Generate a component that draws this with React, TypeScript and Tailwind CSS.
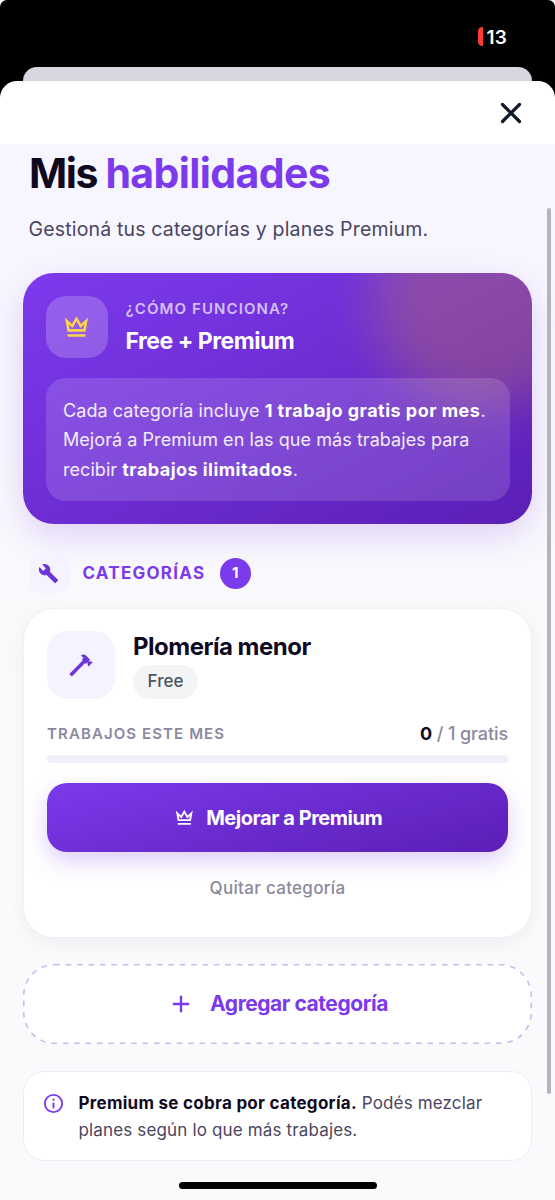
import React from "react";

const ICONS = {
  crown:
    "M12 8L15 13.2L18 10.5L17.3 14H6.7L6 10.5L9 13.2L12 8M12 4L8.5 10L3 5L5 16H19L21 5L15.5 10L12 4M19 18H5V19C5 19.6 5.4 20 6 20H18C18.6 20 19 19.6 19 19V18Z",
  wrench:
    "M22.7 19L13.6 9.9C14.5 7.6 14 4.9 12.1 3C10.1 1 7.1 .6 4.7 1.7L9 6L6 9L1.6 4.7C.4 7.1 .9 10.1 2.9 12.1C4.8 14 7.5 14.5 9.8 13.6L18.9 22.7C19.3 23.1 19.9 23.1 20.3 22.7L22.6 20.4C23.1 20 23.1 19.3 22.7 19Z",
  hammer:
    "M2 19.63L13.43 8.2L12.72 7.5L14.14 6.07L12 3.89C13.2 2.7 15.09 2.7 16.27 3.89L19.87 7.5L18.45 8.91H21.29L22 9.62L18.45 13.21L17.74 12.5V9.62L16.27 11.04L15.56 10.33L4.13 21.76L2 19.63Z",
  plus: "M19 13H13V19H11V13H5V11H11V5H13V11H19V13Z",
  info: "M11 9H13V7H11M12 20C7.59 20 4 16.41 4 12C4 7.59 7.59 4 12 4C16.41 4 20 7.59 20 12C20 16.41 16.41 20 12 20M12 2A10 10 0 0 0 2 12A10 10 0 0 0 12 22A10 10 0 0 0 22 12A10 10 0 0 0 12 2M11 17H13V11H11V17Z",
};

interface IconProps {
  name: keyof typeof ICONS;
  size: number;
  className?: string;
}

const Icon: React.FC<IconProps> = ({ name, size, className }) => (
  <svg
    viewBox="0 0 24 24"
    width={size}
    height={size}
    fill="currentColor"
    className={className}
  >
    <path d={ICONS[name]} />
  </svg>
);

const StatusBar = () => (
  <div className="flex h-[67px] items-start justify-end pt-[27px] pr-[48px]">
    <div className="flex h-[19px] items-center gap-[3px]">
      <span className="h-[19px] w-[5px] rounded-l-[5px] rounded-r-[1px] bg-[#fd3b30]" />
      <span className="pt-px text-[19px] leading-none font-semibold tracking-[0.2px] text-white">
        13
      </span>
    </div>
  </div>
);

const HowItWorks = () => (
  <section className="relative mt-[29px] h-[251px] overflow-hidden rounded-[31px] bg-linear-[153deg,#7c3aed_0%,#6d2dd3_50%,#5b1eb5_100%] px-[22.5px] pt-[22.5px]">
    <div className="absolute -top-[80px] -right-[56px] size-[216px] rounded-full bg-amber-400/20 blur-[25px]" />
    <div className="relative flex items-center">
      <div className="flex size-[62px] items-center justify-center rounded-[20px] bg-white/20">
        <Icon name="crown" size={31} className="text-[#fcd34d]" />
      </div>
      <div className="ml-[18px]">
        <p className="pt-px text-[15px] leading-[20px] font-semibold tracking-[1.1px] text-white/70">
          ¿CÓMO FUNCIONA?
        </p>
        <p className="mt-[8px] text-[23px] leading-[28px] font-bold tracking-[-0.5px] text-white">
          Free + Premium
        </p>
      </div>
    </div>
    <p className="relative mt-[20px] h-[123.5px] rounded-[20px] bg-white/14 px-[17.5px] pt-[18px] text-[18px] leading-[29.7px] tracking-[0.06px] whitespace-nowrap text-white/90">
      Cada categoría incluye{" "}
      <b className="font-bold tracking-[0.48px] text-white">
        1 trabajo gratis por mes
      </b>
      .
      <br />
      Mejorá a Premium en las que más trabajes para
      <br />
      recibir{" "}
      <b className="font-bold tracking-[0.45px] text-white">
        trabajos ilimitados
      </b>
      .
    </p>
  </section>
);

const CategoryCard = () => (
  <section className="mt-[15px] h-[330px] rounded-[31px] border border-[#f0eff5] bg-white px-[23px] pt-[22px] shadow-[0_5px_18px_rgba(20,15,50,0.05)]">
    <div className="flex">
      <div className="flex size-[68px] items-center justify-center rounded-[21px] bg-[#f5f3ff]">
        <Icon name="hammer" size={28} className="text-[#6d34d8]" />
      </div>
      <div className="ml-[18px]">
        <h2 className="pt-px text-[24px] leading-[30px] font-bold tracking-[-0.5px] text-[#0f0a1f]">
          Plomería menor
        </h2>
        <div className="mt-[3px] flex h-[34px] w-[65px] items-center justify-center rounded-full bg-[#f3f4f6] text-[17px] font-medium text-[#4b5563]">
          Free
        </div>
      </div>
    </div>
    <div className="mt-[22.5px] flex items-center justify-between">
      <span className="text-[15px] leading-[24px] font-semibold tracking-[1.1px] text-[#8b88a0]">
        TRABAJOS ESTE MES
      </span>
      <span className="text-[18px] leading-[24px] font-medium tracking-[-0.1px] text-[#8b88a0]">
        <b className="font-bold text-[#0f0a1f]">0</b> / 1 gratis
      </span>
    </div>
    <div className="mt-[9.5px] h-[8px] rounded-full bg-[#f0eef7]" />
    <button className="mt-[20px] flex h-[69px] w-full items-center justify-center gap-[11px] rounded-[20px] bg-linear-[165deg,#7c3aed_0%,#6d2dd3_45%,#5b1eb5_100%] text-[20px] font-bold tracking-[-0.45px] text-white shadow-[0_9px_22px_rgba(124,58,237,0.25)]">
      <Icon name="crown" size={22.6} />
      Mejorar a Premium
    </button>
    <button className="mt-[23px] block w-full text-center text-[17px] leading-[26px] font-medium tracking-[0.3px] text-[#8b88a0]">
      Quitar categoría
    </button>
  </section>
);

const AddCategoryButton = () => (
  <button className="relative mt-[26px] flex h-[80px] w-full items-center justify-center gap-[15px] rounded-[31px] bg-white text-[21px] font-bold tracking-[-0.45px] text-[#7c3aed]">
    <svg className="absolute inset-0 size-full" fill="none">
      <rect
        x="0.8"
        y="0.8"
        width="507.4"
        height="78.4"
        rx="30.5"
        stroke="#c9bcec"
        strokeWidth="1.6"
        strokeDasharray="5.7 5.7"
      />
    </svg>
    <Icon name="plus" size={28} />
    Agregar categoría
  </button>
);

export default function App() {
  return (
    <div className="bg-white font-[Inter,'Liberation_Sans',sans-serif]">
      <div className="relative flex h-[1200px] w-[555px] flex-col overflow-hidden rounded-t-[7px] bg-black">
        <StatusBar />
        <div className="mx-[23px] h-[14px] rounded-t-[14px] bg-[#d8d6e1]" />
        <div className="flex h-[63px] items-center justify-end rounded-t-[17px] bg-white pr-[34px]">
          <svg
            viewBox="0 0 20 20"
            className="size-[20px] overflow-visible text-[#111827]"
            stroke="currentColor"
            strokeWidth="3.2"
            strokeLinecap="round"
          >
            <path d="M1.5 1.5L18.5 18.5M18.5 1.5L1.5 18.5" />
          </svg>
        </div>
        <main className="flex-1 bg-linear-[180deg,#f7f5ff_0%,#f8f7fd_25%,#fafafc_50%] px-[23px]">
          <h1 className="ml-[6px] pt-[4px] text-[41px] leading-[50px] font-bold tracking-[-1.4px] text-[#0f0a1f]">
            Mis{" "}
            <span className="tracking-[-0.6px] text-[#7c3aed]">
              habilidades
            </span>
          </h1>
          <p className="mt-[17px] ml-[5.5px] text-[19.5px] leading-[29px] tracking-[0.17px] text-[#4a4560]">
            Gestioná tus categorías y planes Premium.
          </p>
          <div className="rounded-[31px] shadow-[0_12px_34px_rgba(124,58,237,0.2)]">
            <HowItWorks />
          </div>
          <div className="mt-[29px] ml-[5.5px] flex h-[40px] items-center">
            <div className="flex size-[40px] items-center justify-center rounded-[11px] bg-[#f5f3ff]">
              <Icon name="wrench" size={21} className="text-[#6d34d8]" />
            </div>
            <span className="ml-[14px] pt-px text-[17px] font-bold tracking-[1.25px] text-[#7c3aed]">
              CATEGORÍAS
            </span>
            <span className="ml-[14.5px] flex size-[31px] items-center justify-center rounded-full bg-[#7c3aed] text-[15px] font-bold text-white">
              1
            </span>
          </div>
          <CategoryCard />
          <AddCategoryButton />
          <div className="mt-[27px] flex h-[90px] rounded-[21px] border border-[#eeedf4] bg-white pt-[18px] pl-[18px]">
            <Icon name="info" size={23} className="mt-[2px] text-[#7c3aed]" />
            <p className="ml-[13.5px] text-[17px] leading-[27px] tracking-[0.15px] whitespace-nowrap text-[#4a4560]">
              <b className="font-bold tracking-[0.27px] text-[#0f0a1f]">
                Premium se cobra por categoría.
              </b>{" "}
              Podés mezclar
              <br />
              planes según lo que más trabajes.
            </p>
          </div>
          <div className="mx-auto mt-[21px] h-[7px] w-[198px] rounded-full bg-black" />
        </main>
        <div className="absolute top-[208px] right-[4px] h-[886px] w-[4px] rounded-full bg-[#b5b4ba]" />
      </div>
    </div>
  );
}
